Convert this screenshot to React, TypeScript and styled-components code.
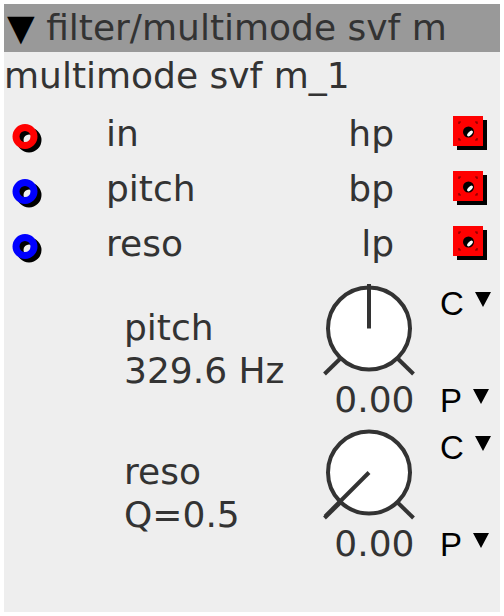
import React from 'react';
import styled, { createGlobalStyle } from 'styled-components';

type PortType = {
    input: string
    output: string
    color: string
}

type KnobType = {
    label: string
    readout: string
    value: string
    angle: number
    reach: number
}

const ports: Array<PortType> = [
    { input: 'in', output: 'hp', color: '#ff0000' },
    { input: 'pitch', output: 'bp', color: '#0000ff' },
    { input: 'reso', output: 'lp', color: '#0000ff' },
];

const knobs: Array<KnobType> = [
    { label: 'pitch', readout: '329.6 Hz', value: '0.00', angle: 0, reach: 44.5 },
    { label: 'reso', readout: 'Q=0.5', value: '0.00', angle: -135, reach: 62 },
];

const Jack: React.FC<{ color: string }> = ({ color }) => (
    <svg width="44" height="55" viewBox="0 0 44 55">
        <circle cx="25" cy="34" r="9" fill="none" stroke="#000" strokeWidth="7" />
        <circle cx="21" cy="30.5" r="9" fill="none" stroke={ color } strokeWidth="7" />
    </svg>
);

const OutJack: React.FC = () => (
    <svg width="36" height="36" viewBox="0 0 36 36">
        <rect x="4" y="4" width="30" height="30" fill="#000" />
        <rect x="0" y="0" width="30" height="30" fill="#ff0000" />
        <path d="M6 8V6H8 M22 6H24V8 M6 22V24H8 M22 24H24V22" fill="none" stroke="#700" strokeWidth="1.2" />
        <circle cx="15.5" cy="16" r="5.5" fill="#000" />
        <ellipse cx="17" cy="17.5" rx="3.6" ry="1.8" transform="rotate(-45 17 17.5)" fill="#fff" />
    </svg>
);

const Knob: React.FC<{ angle: number, reach: number }> = ({ angle, reach }) => {
    const rad = (angle - 90) * Math.PI / 180;
    const x = 50 + reach * Math.cos(rad);
    const y = 48.5 + reach * Math.sin(rad);
    return (
        <svg width="100" height="96" viewBox="0 0 100 96">
            <g stroke="#333" strokeWidth="4" strokeLinecap="butt">
                <line x1="5.5" y1="94" x2="26" y2="74" />
                <line x1="94.5" y1="94" x2="74" y2="74" />
                <circle cx="50" cy="48.5" r="41" fill="#fff" />
                <line x1="50" y1="48.5" x2={ x } y2={ y } />
            </g>
        </svg>
    );
};

const App: React.FC = () => {
    return (
        <>
            <GlobalStyle />
            <Panel>
                <Header>▼ filter/multimode svf m</Header>
                <Title>multimode svf m_1</Title>
                <Ports>
                    { ports.map(p => (
                        <PortRow key={ p.input }>
                            <Jack color={ p.color } />
                            <span>{ p.input }</span>
                            <OutLabel>{ p.output }</OutLabel>
                            <OutCell><OutJack /></OutCell>
                        </PortRow>
                    )) }
                </Ports>
                <Knobs>
                    { knobs.map(k => (
                        <KnobRow key={ k.label }>
                            <Readout>
                                <div>{ k.label }</div>
                                <div>{ k.readout }</div>
                            </Readout>
                            <KnobCell>
                                <Knob angle={ k.angle } reach={ k.reach } />
                                <Value>{ k.value }</Value>
                            </KnobCell>
                            <Selects>
                                <Select>C<Caret /></Select>
                                <Select>P<Caret /></Select>
                            </Selects>
                        </KnobRow>
                    )) }
                </Knobs>
            </Panel>
        </>
    )
}

export default App;


const GlobalStyle = createGlobalStyle`
    body {
        margin: 0;
        background: #fff;
    }
`

const Panel = styled.div`
    margin: 4px;
    width: 496px;
    height: 608px;
    background: #eeeeee;
    color: #333;
    font-family: "DejaVu Sans", sans-serif;
    font-size: 36px;
    overflow: hidden;
`

const Header = styled.div`
    height: 48px;
    line-height: 48px;
    padding-left: 3px;
    background: #999999;
    white-space: nowrap;

    &::first-letter {
        color: #000;
    }
`

const Title = styled.div`
    height: 48px;
    line-height: 48px;
    white-space: nowrap;
`

const Ports = styled.div`
    padding-top: 6px;
`

const PortRow = styled.div`
    display: grid;
    grid-template-columns: 102px 1fr auto 106px;
    align-items: center;
    height: 55px;
    line-height: 55px;
`

const OutLabel = styled.span`
    text-align: right;
`

const OutCell = styled.div`
    display: flex;
    padding-left: 59px;
`

const Knobs = styled.div`
    padding-top: 3px;
`

const KnobRow = styled.div`
    display: grid;
    grid-template-columns: 194.5px 100px auto;
    align-items: start;
    height: 144px;
    padding-left: 120px;
`

const Readout = styled.div`
    margin-top: 32px;
    line-height: 43px;
    white-space: nowrap;
`

const KnobCell = styled.div`
    display: flex;
    flex-direction: column;
    padding-top: 6px;

    svg {
        display: block;
    }
`

const Value = styled.div`
    margin-top: 3.5px;
    padding-right: 4px;
    line-height: 40px;
    text-align: right;
`

const Selects = styled.div`
    display: flex;
    flex-direction: column;
    gap: 57px;
    margin-top: 10px;
    padding-left: 21.5px;
`

const Select = styled.div`
    display: flex;
    align-items: flex-start;
    height: 40px;
    line-height: 40px;
    color: #000;
    font-family: "Liberation Sans", Arial, sans-serif;
    font-size: 33px;
`

const Caret = styled.span`
    width: 0;
    height: 0;
    margin-top: 8px;
    margin-left: 11px;
    border-left: 8.5px solid transparent;
    border-right: 8.5px solid transparent;
    border-top: 15px solid #000;
`
